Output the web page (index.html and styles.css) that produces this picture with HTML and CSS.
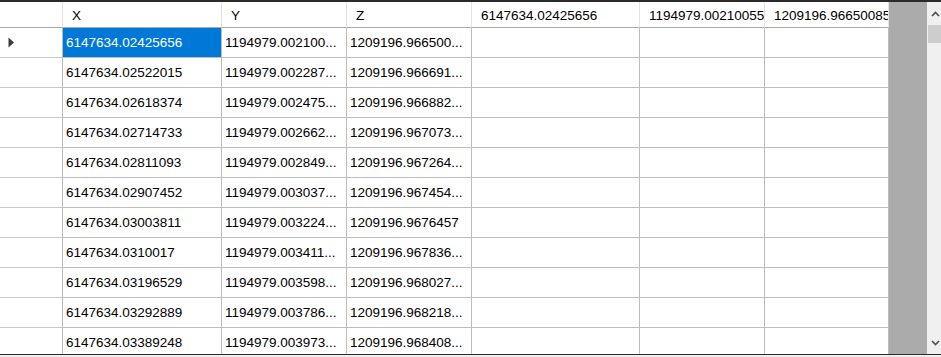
FILE: index.html
```html
<!DOCTYPE html>
<html>
<head>
<meta charset="utf-8">
<link rel="stylesheet" href="styles.css">
</head>
<body>
<div class="frame">
  <div class="sheet">
    <div class="table">
      <div class="hcell corner"></div>
      <div class="hcell">X</div>
      <div class="hcell">Y</div>
      <div class="hcell">Z</div>
      <div class="hcell">6147634.02425656</div>
      <div class="hcell">1194979.00210055</div>
      <div class="hcell">1209196.96650085</div>

      <div class="rhead current"><svg class="arrow" width="7" height="11" viewBox="0 0 7 11"><path d="M0.5 0.5 L6 5.5 L0.5 10.5 Z" fill="#3c3c3c"/></svg></div>
      <div class="cell selected">6147634.02425656</div>
      <div class="cell">1194979.002100...</div>
      <div class="cell">1209196.966500...</div>
      <div class="cell"></div><div class="cell"></div><div class="cell"></div>

      <div class="rhead"></div>
      <div class="cell">6147634.02522015</div>
      <div class="cell">1194979.002287...</div>
      <div class="cell">1209196.966691...</div>
      <div class="cell"></div><div class="cell"></div><div class="cell"></div>

      <div class="rhead"></div>
      <div class="cell">6147634.02618374</div>
      <div class="cell">1194979.002475...</div>
      <div class="cell">1209196.966882...</div>
      <div class="cell"></div><div class="cell"></div><div class="cell"></div>

      <div class="rhead"></div>
      <div class="cell">6147634.02714733</div>
      <div class="cell">1194979.002662...</div>
      <div class="cell">1209196.967073...</div>
      <div class="cell"></div><div class="cell"></div><div class="cell"></div>

      <div class="rhead"></div>
      <div class="cell">6147634.02811093</div>
      <div class="cell">1194979.002849...</div>
      <div class="cell">1209196.967264...</div>
      <div class="cell"></div><div class="cell"></div><div class="cell"></div>

      <div class="rhead"></div>
      <div class="cell">6147634.02907452</div>
      <div class="cell">1194979.003037...</div>
      <div class="cell">1209196.967454...</div>
      <div class="cell"></div><div class="cell"></div><div class="cell"></div>

      <div class="rhead"></div>
      <div class="cell">6147634.03003811</div>
      <div class="cell">1194979.003224...</div>
      <div class="cell">1209196.9676457</div>
      <div class="cell"></div><div class="cell"></div><div class="cell"></div>

      <div class="rhead"></div>
      <div class="cell">6147634.0310017</div>
      <div class="cell">1194979.003411...</div>
      <div class="cell">1209196.967836...</div>
      <div class="cell"></div><div class="cell"></div><div class="cell"></div>

      <div class="rhead"></div>
      <div class="cell">6147634.03196529</div>
      <div class="cell">1194979.003598...</div>
      <div class="cell">1209196.968027...</div>
      <div class="cell"></div><div class="cell"></div><div class="cell"></div>

      <div class="rhead"></div>
      <div class="cell">6147634.03292889</div>
      <div class="cell">1194979.003786...</div>
      <div class="cell">1209196.968218...</div>
      <div class="cell"></div><div class="cell"></div><div class="cell"></div>

      <div class="rhead"></div>
      <div class="cell">6147634.03389248</div>
      <div class="cell">1194979.003973...</div>
      <div class="cell">1209196.968408...</div>
      <div class="cell"></div><div class="cell"></div><div class="cell"></div>
    </div>
    <div class="fill"></div>
    <div class="vscroll">
      <div class="sbtn up"><svg width="9" height="6" viewBox="0 0 9 6"><path d="M1 5 L4.5 1.5 L8 5" fill="none" stroke="#505050" stroke-width="1.7"/></svg></div>
      <div class="track"><div class="thumb"></div></div>
      <div class="sbtn down"><svg width="9" height="6" viewBox="0 0 9 6"><path d="M1 1 L4.5 4.5 L8 1" fill="none" stroke="#505050" stroke-width="1.7"/></svg></div>
    </div>
  </div>
</div>
</body>
</html>
```
FILE: styles.css
```css
html, body {
  margin: 0;
  padding: 0;
  overflow: hidden;
  background: #f0f0f0;
}

.frame {
  width: 941px;
  height: 355px;
  overflow: hidden;
  border-top: 2px solid #2b2b2b;
  border-bottom: 1px solid #2b2b2b;
  box-sizing: border-box;
  font-family: "Liberation Sans", Arial, sans-serif;
  font-size: 13.5px;
  color: #000;
}

.sheet {
  width: 944px;
  height: 352px;
  display: flex;
}

.table {
  display: grid;
  grid-template-columns: 63px 159px 125px 125px 168px 125px 124px;
  grid-template-rows: 26px;
  grid-auto-rows: 30px;
  background: #fff;
  overflow: hidden;
  flex: none;
  align-content: start;
}

.hcell,
.rhead,
.cell {
  box-sizing: border-box;
  white-space: nowrap;
  overflow: hidden;
  display: flex;
  align-items: center;
  background: #fff;
}

.hcell {
  border-right: 1px solid #e3e3e3;
  border-bottom: 1px solid #a9a9a9;
  padding-left: 9px;
  padding-top: 1px;
}

.rhead {
  border-right: 1px solid #b9b9b9;
  border-bottom: 1px solid #c8c8c8;
  padding-left: 8px;
}

.cell {
  border-right: 1px solid #bdbdbd;
  border-bottom: 1px solid #bdbdbd;
  padding-left: 3px;
}

.cell.selected {
  background: #0078d7;
  color: #fff;
}

.arrow {
  display: block;
}

.fill {
  flex: 1;
  background: #ababab;
}

.vscroll {
  width: 17px;
  flex: none;
  background: #f0f0f0;
  display: flex;
  flex-direction: column;
}

.sbtn {
  height: 23px;
  display: flex;
  align-items: center;
  justify-content: center;
  flex: none;
}

.track {
  flex: 1;
  padding: 0 1px;
}

.thumb {
  height: 18px;
  background: #cdcdcd;
}
```
